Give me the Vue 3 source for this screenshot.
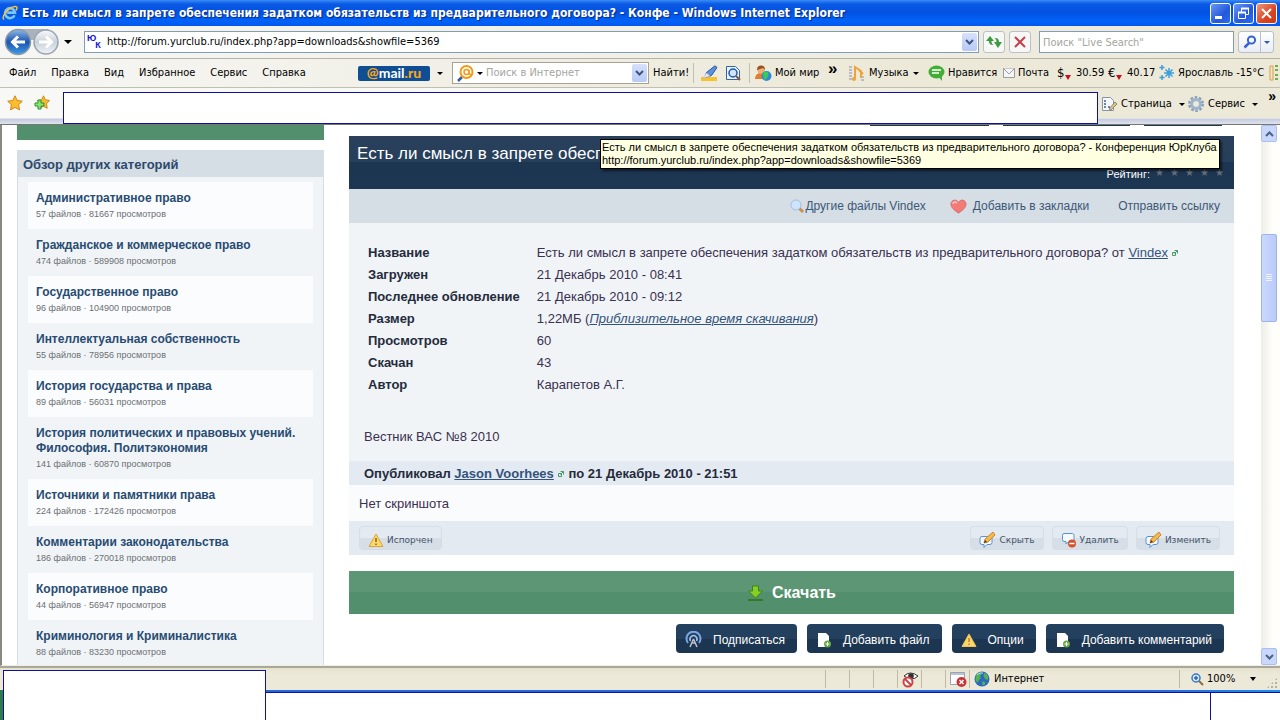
<script setup>
import { ref } from 'vue'

const address = ref('http://forum.yurclub.ru/index.php?app=downloads&showfile=5369')
const liveSearch = ref('')
const mailSearch = ref('')

const menu = ['Файл', 'Правка', 'Вид', 'Избранное', 'Сервис', 'Справка']

const categories = [
  { title: 'Административное право', files: 57, views: 81667 },
  { title: 'Гражданское и коммерческое право', files: 474, views: 589908 },
  { title: 'Государственное право', files: 96, views: 104900 },
  { title: 'Интеллектуальная собственность', files: 55, views: 78956 },
  { title: 'История государства и права', files: 89, views: 56031 },
  { title: 'История политических и правовых учений. Философия. Политэкономия', files: 141, views: 60870 },
  { title: 'Источники и памятники права', files: 224, views: 172426 },
  { title: 'Комментарии законодательства', files: 186, views: 270018 },
  { title: 'Корпоративное право', files: 44, views: 56947 },
  { title: 'Криминология и Криминалистика', files: 88, views: 83230 },
]
</script>

<template>
  <div class="window">
    <header class="titlebar">
      <svg class="ie-logo" width="16" height="16" viewBox="0 0 16 16">
        <path d="M12.6 10.2A5 5 0 1 1 13 7.6H5.2" fill="none" stroke="#7cc4f8" stroke-width="2.6" />
        <path d="M2 14.5C-1 12 6 2.500 13 1.500c3-.4 2 2.500 1 4" fill="none" stroke="#f2c53c" stroke-width="1.500" />
      </svg>
      <h1>Есть ли смысл в запрете обеспечения задатком обязательств из предварительного договора? - Конфе - Windows Internet Explorer</h1>
      <div class="window-buttons">
        <button aria-label="Свернуть">
          <svg width="19" height="19" viewBox="0 0 19 19"><path d="M4 13.500h7" stroke="#fff" stroke-width="3" /></svg>
        </button>
        <button aria-label="Восстановить">
          <svg width="19" height="19" viewBox="0 0 19 19" fill="none" stroke="#fff">
            <path d="M7.500 8V4.500h7v6H12" /><path d="M7 4.500h8M4 8.500h8" stroke-width="2" /><path d="M4.500 8.500h7v6h-7z" />
          </svg>
        </button>
        <button class="close" aria-label="Закрыть">
          <svg width="19" height="19" viewBox="0 0 19 19"><path d="M5 5l9 9M14 5l-9 9" stroke="#fff" stroke-width="2" /></svg>
        </button>
      </div>
    </header>

    <div class="navbar">
      <svg class="back-forward" width="56" height="28" viewBox="0 0 56 28">
        <defs>
          <linearGradient id="back" x2="0" y2="1"><stop offset="0" stop-color="#8fb7e8" /><stop offset=".5" stop-color="#1c55ae" /><stop offset="1" stop-color="#3f9ae8" /></linearGradient>
          <linearGradient id="forward" x2="0" y2="1"><stop offset="0" stop-color="#fafcfd" /><stop offset=".5" stop-color="#c8d1da" /><stop offset="1" stop-color="#eff4f8" /></linearGradient>
        </defs>
        <path d="M12 1h32v5c-8 0-8 6-16 6S20 4 12 4z" fill="#a9b2bd" />
        <circle cx="14" cy="14" r="12.500" fill="url(#back)" stroke="#8d9aaa" stroke-width="1.500" />
        <circle cx="42" cy="14" r="12" fill="url(#forward)" stroke="#9aa5b0" stroke-width="1.500" />
        <path d="M21 14H9M14 8.500L8.500 14l5.500 5.500" fill="none" stroke="#fff" stroke-width="3" />
        <path d="M35 14h12M42 8.500l5.500 5.500-5.500 5.500" fill="none" stroke="#fff" stroke-width="3" />
      </svg>
      <i class="arrow nav-arrow"></i>
      <div class="address">
        <span class="favicon"><b>Ю</b><b>К</b></span>
        <input v-model="address" aria-label="Адрес">
        <button class="drop" aria-label="Список адресов">
          <svg width="9" height="6" viewBox="0 0 9 6"><path d="M1 1l3.500 3.500L8 1" fill="none" stroke="#3e557f" stroke-width="2" /></svg>
        </button>
      </div>
      <button class="nav-button" aria-label="Обновить">
        <svg width="16" height="16" viewBox="0 0 16 16">
          <path d="M0 7l4-5 4 5H5.500c0 2 .5 3 2 4C4 11 3 9.500 3 7zM16 8l-4 6-4-6h2.500c0-2-.5-3-2-4C12 4 13 5.500 13 8z" fill="#3d9a41" />
        </svg>
      </button>
      <button class="nav-button" aria-label="Остановить">
        <svg width="14" height="14" viewBox="0 0 14 14"><path d="M2 2l10 10M12 2L2 12" stroke="#c4414b" stroke-width="2" /></svg>
      </button>
      <input v-model="liveSearch" class="live-search" placeholder='Поиск "Live Search"' aria-label="Live Search">
      <div class="search-buttons">
        <button aria-label="Найти">
          <svg width="14" height="14" viewBox="0 0 14 14" fill="none" stroke="#3564d4"><circle cx="8.500" cy="5" r="3.600" stroke-width="2" /><path d="M6 8l-4.500 4.500" stroke-width="2.500" /></svg>
        </button>
        <button aria-label="Параметры поиска"><i class="arrow blue"></i></button>
      </div>
    </div>

    <div class="menubar">
      <nav>
        <a v-for="item in menu" :key="item" href="#">{{ item }}</a>
      </nav>
      <a class="mailru" href="#"><b>@</b>mail<b>.ru</b></a>
      <i class="arrow mail-arrow"></i>
      <div class="mail-search">
        <svg width="17" height="17" viewBox="0 0 17 17" fill="none">
          <path d="M5 12l-4 4" stroke="#315b9c" stroke-width="2.500" />
          <circle cx="9.500" cy="7" r="6" stroke="#f59a17" stroke-width="2" /><circle cx="9.500" cy="7" r="2.500" stroke="#f59a17" stroke-width="1.500" /><path d="M12 5v4l3 1" stroke="#f59a17" stroke-width="1.500" />
        </svg>
        <i class="arrow"></i>
        <input v-model="mailSearch" placeholder="Поиск в Интернет" aria-label="Поиск в Интернет">
        <button class="drop" aria-label="История поиска">
          <svg width="9" height="6" viewBox="0 0 9 6"><path d="M1 1l3.500 3.500L8 1" fill="none" stroke="#3e557f" stroke-width="2" /></svg>
        </button>
      </div>
      <button class="find">Найти!</button>
      <div class="tool-icons">
        <svg width="17" height="16" viewBox="0 0 17 16"><path d="M0 12h16v4H0z" fill="#f8c22c" /><path d="M4 12.500l1.500-5L14 .800l2 1.700-5.500 8z" fill="#5b93e0" stroke="#28579d" /><path d="M2 13.500l3.500-5.500 3.500 3z" fill="#e8edf5" stroke="#a7b2c4" stroke-width=".6" /></svg>
        <svg width="16" height="16" viewBox="0 0 16 16" fill="none"><path d="M1.500 1.500h9l4 4v9h-13z" fill="#eef4fd" stroke="#2f65b5" /><circle cx="8" cy="8" r="4" fill="#cfe3fa" stroke="#2457a8" stroke-width="1.500" /><path d="M11 11l4 4" stroke="#8b5a32" stroke-width="2" /></svg>
      </div>
      <a class="tool my-world" href="#">
        <svg width="17" height="17" viewBox="0 0 17 17"><path d="M0 14c0-8 11-8 11 0z" fill="#e57d2e" /><circle cx="6" cy="5" r="3.700" fill="#f0b070" /><path d="M2 5c-.5-6 8.500-6 8 0L8 3z" fill="#9a5222" /><circle cx="11.500" cy="11" r="5" fill="#3288d8" /><path d="M8 8c3-3 7 0 5 3s-3 5-4 3z" fill="#38cd50" /></svg>
        Мой мир
      </a>
      <span class="chevrons">»</span>
      <a class="tool music" href="#">
        <svg width="17" height="17" viewBox="0 0 17 17"><path d="M1 2h3M1 5h3M1 8h3M1 11h3M1 14h3M13 12h3M13 15h3" stroke="#b9bcc2" stroke-width="2" /><path d="M7 14V2l6 4v7M11 5l4 4" fill="none" stroke="#efa33a" stroke-width="2" /><circle cx="6" cy="14" r="2" fill="#efa33a" /></svg>
        Музыка
        <i class="arrow"></i>
      </a>
      <a class="tool like" href="#">
        <svg width="17" height="16" viewBox="0 0 17 16"><ellipse cx="8.500" cy="7" rx="8" ry="6.500" fill="#42ad38" /><path d="M10 11l4 5v-6z" fill="#42ad38" /><path d="M4 5h9M4 8h7" stroke="#fff" stroke-width="1.500" /></svg>
        Нравится
      </a>
      <a class="tool mail" href="#">
        <svg width="12" height="10" viewBox="0 0 12 10" fill="#f5f5f6" stroke="#9a9da6"><path d="M.5.500h11v9H.5z" /><path d="M.5.500L6 6l5.500-5.500" /></svg>
        Почта
      </a>
      <a class="tool rate" href="#"><span>$</span><i></i>30.59</a>
      <a class="tool rate" href="#"><span>€</span><i></i>40.17</a>
      <a class="tool weather" href="#">
        <svg width="16" height="16" viewBox="0 0 16 16" stroke="#3b9ddc" fill="none"><path d="M10 3v10M5 8h10M6.500 4.500l7 7M13.500 4.500l-7 7" stroke-width="1.500" /><path d="M3 0v5M.500 2.500h5M3 10v5M.500 12.500h5" stroke-width="1.500" /></svg>
        Ярославль -15°C
      </a>
      <svg class="cut-icon" width="9" height="16" viewBox="0 0 9 16"><path d="M1 1h3v14H1z" fill="#f5e6c8" stroke="#d99a4a" /><path d="M6 1h3M6 5h3M6 10h3M6 14h3" stroke="#6fb04d" stroke-width="2" /></svg>
    </div>

    <div class="favbar">
      <button class="fav" aria-label="Избранное">
        <svg width="16" height="16" viewBox="0 0 16 16"><path d="M8 .8l2.200 4.700 5.100.7-3.700 3.500.9 5.200L8 12.400l-4.500 2.500.9-5.200L.7 6.200l5.100-.7z" fill="#fbbd2c" stroke="#cf861b" /></svg>
      </button>
      <button class="fav" aria-label="Добавить в избранное">
        <svg width="16" height="16" viewBox="0 0 16 16"><path d="M9.500.8l1.800 4 4.200.7-3 3.200.7 4.600-3.700-2-4 2 .8-4.600-3-3.200 4.400-.7z" fill="#fbbd2c" stroke="#cf861b" /><path d="M4 5h3v3h3v3H7v3H4v-3H1V8h3z" fill="#8be26c" stroke="#2c9231" /></svg>
      </button>
      <div class="blank-tabs"></div>
      <div class="commands">
        <a class="page-menu" href="#">
          <svg width="16" height="16" viewBox="0 0 16 16"><path d="M1.500 1.500h8l3 3v10h-11z" fill="#f4f7fb" stroke="#8794a8" /><path d="M3 5h2M3 8h2M3 11h2M7 11h2" stroke="#6e83ab" stroke-width="2" /><path d="M8 13l6-7 2 2-6 6z" fill="#d8c58c" stroke="#756849" stroke-width=".7" /></svg>
          Страница
          <i class="arrow"></i>
        </a>
        <a href="#">
          <svg width="16" height="16" viewBox="0 0 16 16" fill="none"><circle cx="8" cy="8" r="6.500" stroke="#8da2bb" stroke-width="3" stroke-dasharray="2.500 1.580" /><circle cx="8" cy="8" r="4.500" stroke="#9fb4cc" stroke-width="3" /></svg>
          Сервис
          <i class="arrow"></i>
        </a>
        <span class="chevrons">»</span>
      </div>
    </div>

    <div class="viewport">
      <div class="page">
        <aside>
          <div class="green-tail"></div>
          <section class="categories">
            <h2>Обзор других категорий</h2>
            <ul>
              <li v-for="cat in categories" :key="cat.title">
                <a href="#">{{ cat.title }}</a>
                <p>{{ cat.files }} файлов · {{ cat.views }} просмотров</p>
              </li>
            </ul>
          </section>
        </aside>

        <main>
          <div class="button-tails"><i></i><i></i><i></i></div>
          <div class="file-head">
            <h2>Есть ли смысл в запрете обеспечения</h2>
            <div class="rating">Рейтинг: <span v-for="n in 5" :key="n">★</span></div>
          </div>
          <div class="file-links">
            <a href="#">
              <svg width="15" height="15" viewBox="0 0 15 15"><path d="M9 9l4 4" stroke="#c9924b" stroke-width="3" /><circle cx="6" cy="6" r="5" fill="#cde4fa" stroke="#9fc0e4" /></svg>Другие файлы Vindex
            </a>
            <a class="bookmark" href="#">
              <svg width="17" height="15" viewBox="0 0 17 15"><path d="M8.500 14C4 11 1 8.500 1 5c0-4 5.500-5.500 7.500-1.500C10.500-.5 16 1 16 5c0 3.500-3 6-7.500 9z" fill="#f47a78" stroke="#d66b6b" /><path d="M3 5c0-2 2-3 4-1" fill="none" stroke="#fcc5c2" stroke-width="1.500" /></svg>
              Добавить в закладки
            </a>
            <a class="send" href="#">Отправить ссылку</a>
          </div>

          <div class="details">
            <table>
              <tbody>
                <tr>
                  <th scope="row">Название</th>
                  <td>
                    Есть ли смысл в запрете обеспечения задатком обязательств из предварительного договора? от <a href="#">Vindex</a>
                    <svg class="popup" width="6" height="6" viewBox="0 0 6 6" fill="none" stroke="#4b9a68"><path d="M.500 2.500h3v3h-3zM2.500.500h3v3M2.500 3.500l3-3" /></svg>
                  </td>
                </tr>
                <tr><th scope="row">Загружен</th><td>21 Декабрь 2010 - 08:41</td></tr>
                <tr><th scope="row">Последнее обновление</th><td>21 Декабрь 2010 - 09:12</td></tr>
                <tr><th scope="row">Размер</th><td>1,22МБ (<a href="#"><em>Приблизительное время скачивания</em></a>)</td></tr>
                <tr><th scope="row">Просмотров</th><td>60</td></tr>
                <tr><th scope="row">Скачан</th><td>43</td></tr>
                <tr><th scope="row">Автор</th><td>Карапетов А.Г.</td></tr>
              </tbody>
            </table>
            <p>Вестник ВАС №8 2010</p>
          </div>
          <div class="published">
            Опубликовал <a href="#">Jason Voorhees</a>
            <svg class="popup" width="6" height="6" viewBox="0 0 6 6" fill="none" stroke="#4b9a68"><path d="M.500 2.500h3v3h-3zM2.500.500h3v3M2.500 3.500l3-3" /></svg>
            по 21 Декабрь 2010 - 21:51
          </div>
          <div class="screenshot">Нет скриншота</div>
          <div class="moderation">
            <button class="broken">
              <svg width="16" height="16" viewBox="0 0 16 16"><path d="M8 2l7 12.500H1z" fill="#fbd768" stroke="#dba63a" stroke-linejoin="round" /><path d="M8 6v4M8 11.500v1.500" stroke="#8d6420" stroke-width="1.500" /></svg>
              Испорчен
            </button>
            <button v-for="label in ['Скрыть', 'Удалить', 'Изменить']" :key="label">
              <svg v-if="label === 'Удалить'" width="16" height="16" viewBox="0 0 16 16"><path d="M3 1.500h8.500q1.500 0 1.500 2v4q0 2-1.500 2H8L5 12V9.500H3q-1.500 0-1.500-2v-4q0-2 1.500-2z" fill="#f4f9fe" stroke="#5b92cd" /><circle cx="11" cy="11.500" r="4" fill="#d65228" /><path d="M8.500 11.500h5" stroke="#fff" stroke-width="1.500" /></svg>
              <svg v-else width="17" height="16" viewBox="0 0 17 16"><path d="M3 4.500h8q2 0 2 2v4q0 2-2 2H8l-3 3v-3H3q-2 0-2-2v-4q0-2 2-2z" fill="#f4f9fe" stroke="#5b92cd" /><path d="M5 11l1-4 8-7 2 3-7 7z" fill="#f6b74a" stroke="#c98830" /><path d="M5 11l1-3 2 2z" fill="#483b30" /></svg>
              {{ label }}
            </button>
          </div>

          <button class="download">
            <svg width="17" height="16" viewBox="0 0 17 16"><path d="M1 15h15" stroke="#357825" stroke-width="2" /><path d="M5.500 1h6v5h4l-7 7-7-7h4z" fill="#87cf27" stroke="#3c8617" /></svg>
            Скачать
          </button>

          <div class="page-buttons">
            <button>
              <svg width="17" height="17" viewBox="0 0 17 17" fill="none"><path d="M3 12A7 7 0 1 1 14 12" stroke="#7ba5e7" stroke-width="2" /><path d="M5.500 10a3.500 3.500 0 1 1 6 0" stroke="#a7c6f3" stroke-width="1.500" /><path d="M8.500 8l-3.500 8M8.500 8l3.500 8M7 12h3" stroke="#bcc3cf" stroke-width="1.500" /></svg>
              Подписаться
            </button>
            <button>
              <svg width="16" height="16" viewBox="0 0 16 16"><path d="M2 1h8l3 3v11H2z" fill="#fff" /><circle cx="11.500" cy="12" r="3.500" fill="#65a843" /><path d="M9.500 12h4M11.500 10v4" stroke="#fff" /></svg>
              Добавить файл
            </button>
            <button>
              <svg width="16" height="16" viewBox="0 0 16 16"><path d="M8 2l7 12.500H1z" fill="#fbd768" stroke="#f2bd59" stroke-linejoin="round" /><path d="M8 6v4M8 11.500v1.500" stroke="#b4843a" stroke-width="1.500" /></svg>
              Опции
            </button>
            <button>
              <svg width="16" height="16" viewBox="0 0 16 16"><path d="M2 1h8l3 3v11H2z" fill="#fff" /><circle cx="11.500" cy="12" r="3.500" fill="#65a843" /><path d="M9.500 12h4M11.500 10v4" stroke="#fff" /></svg>
              Добавить комментарий
            </button>
          </div>
        </main>
      </div>

      <div class="scrollbar">
        <button aria-label="Вверх"><svg width="9" height="6" viewBox="0 0 9 6"><path d="M1 5l3.500-3.500L8 5" fill="none" stroke="#4d6185" stroke-width="2" /></svg></button>
        <div class="track">
          <div class="thumb"><i></i><i></i><i></i><i></i></div>
        </div>
        <button aria-label="Вниз"><svg width="9" height="6" viewBox="0 0 9 6"><path d="M1 1l3.500 3.500L8 1" fill="none" stroke="#4d6185" stroke-width="2" /></svg></button>
      </div>
    </div>

    <footer class="statusbar">
      <i></i><i></i><i></i>
      <span class="cell">
        <svg width="17" height="17" viewBox="0 0 17 17" fill="none"><path d="M2 5q6-6 14 0-6 6-14 0z" fill="#fff" stroke="#333" /><circle cx="9" cy="5" r="2.800" fill="#333" /><circle cx="6" cy="11" r="4.500" fill="#fff" stroke="#cf4242" stroke-width="2" /><path d="M3 8l6 6" stroke="#cf4242" stroke-width="2" /></svg>
      </span>
      <i></i>
      <span class="cell">
        <svg width="17" height="17" viewBox="0 0 17 17"><path d="M.5 1.500h14v12H.5z" fill="#fff" stroke="#9aa2b0" /><path d="M1 3h13" stroke="#b9c4d6" stroke-width="2" /><circle cx="11.500" cy="11" r="5" fill="#c93338" /><path d="M9.500 9l4 4M13.500 9l-4 4" stroke="#fff" stroke-width="1.500" /></svg>
      </span>
      <span class="zone">
        <svg width="16" height="16" viewBox="0 0 16 16"><circle cx="8" cy="8" r="7.500" fill="#2c68bd" /><path d="M3 3c3-3 6-1 4 1s1 3-1 4-1 4-3 3-2-5 0-8zM10 2c4 1 5 4 4 6s-3 0-4-2 0-2 0-4zM8 11c2-1 4 0 3 2s-3 2-3-2z" fill="#52b353" /><path d="M3 4q3-3 6-2" stroke="#b9dcf7" fill="none" /></svg>
        Интернет
      </span>
      <span class="zoom">
        <svg width="13" height="13" viewBox="0 0 13 13" fill="none"><circle cx="5" cy="5" r="4" fill="#d7e9fb" stroke="#3878c8" stroke-width="1.500" /><path d="M3 5h4M5 3v4" stroke="#2a66b8" stroke-width="1.500" /><path d="M8 8l4 4" stroke="#8b6a42" stroke-width="2" /></svg>
        100%
        <i class="arrow"></i>
      </span>
      <span class="grip"></span>
    </footer>
    <div class="taskbar"><div class="tasks"></div><div class="tray"></div></div>
    <div class="blank-start"></div>

    <div class="tooltip" role="tooltip">
      Есть ли смысл в запрете обеспечения задатком обязательств из предварительного договора? - Конференция ЮрКлуба<br>
      http://forum.yurclub.ru/index.php?app=downloads&amp;showfile=5369
    </div>
  </div>
</template>

<style>
body {
  margin: 0;
}
</style>

<style scoped>
* {
  box-sizing: border-box;
}

.window {
  position: relative;
  display: flex;
  flex-direction: column;
  height: 100vh;
  min-width: 1240px;
  overflow: hidden;
  background: #fff;
  font: 11px/14px "DejaVu Sans Condensed", Tahoma, sans-serif;
  color: #000;
}

a {
  color: inherit;
  text-decoration: none;
}

button,
input {
  padding: 0;
  border: 0;
  background: none;
  font: inherit;
  color: inherit;
}

input {
  outline: none;
  min-width: 0;
}

input::placeholder {
  color: #a5a5a0;
  opacity: 1;
}

svg {
  flex: none;
}

.arrow {
  flex: none;
  border: 3px solid transparent;
  border-top-color: #000;
  border-bottom: 0;
}

.arrow.blue {
  border-top-color: #2858c8;
}

.titlebar {
  display: flex;
  align-items: center;
  flex: none;
  height: 26px;
  padding: 0 3px 0 2px;
  background: linear-gradient(#3a8cf5 0, #0a5ae6 4px, #0351e0 12px, #0262f8 21px, #0358ee 100%);
  color: #fff;
}

.titlebar h1 {
  flex: 1;
  margin: 0 0 0 4px;
  overflow: hidden;
  white-space: nowrap;
  font: bold 12px/20px "DejaVu Sans Condensed", "Trebuchet MS", sans-serif;
  text-shadow: 1px 1px 1px #0a2a80;
}

.window-buttons {
  display: flex;
  gap: 2px;
}

.window-buttons button {
  width: 21px;
  height: 21px;
  border: 1px solid #fff;
  border-radius: 3px;
  background: linear-gradient(135deg, #6b98f5, #2458dc 60%, #2a6cf0);
}

.window-buttons svg {
  display: block;
}

.window-buttons .close {
  background: linear-gradient(135deg, #f0967a, #da4423 60%, #c83a18);
}

.navbar {
  display: flex;
  align-items: center;
  flex: none;
  height: 33px;
  padding: 0 6px 0 4px;
  border-bottom: 1px solid #b5b3a6;
  background: linear-gradient(90deg, #f6f6f4, #ece9d8);
}

.nav-arrow {
  margin: 0 12px 0 4px;
  border-width: 4px 4px 0;
}

.address {
  display: flex;
  align-items: center;
  flex: 1;
  height: 22px;
  padding: 0 1px 0 2px;
  border: 1px solid #7f9db9;
  background: #fff;
}

.address input {
  flex: 1;
  margin-left: 4px;
}

.favicon {
  display: flex;
  width: 16px;
  height: 16px;
  color: #1414d0;
  font: 9px/9px "Liberation Sans", Arial, sans-serif;
}

.favicon b + b {
  align-self: flex-end;
  margin-left: -1px;
}

.drop {
  display: flex;
  align-items: center;
  justify-content: center;
  width: 15px;
  height: 18px;
  border-radius: 2px;
  background: linear-gradient(#d6e1fb, #b7c9f5);
}

.nav-button {
  display: flex;
  align-items: center;
  justify-content: center;
  width: 22px;
  height: 22px;
  margin-left: 4px;
  border: 1px solid #b9c0cb;
  border-radius: 3px;
  background: #f7f7f5;
}

.live-search {
  width: 195px;
  height: 22px;
  margin: 0 4px 0 8px;
  padding: 0 3px;
  border: 1px solid #7f9db9;
  background: #fff;
}

.search-buttons {
  display: flex;
  height: 22px;
  border: 1px solid #b4c0d2;
  border-radius: 3px;
  background: linear-gradient(#fff, #e9edf5);
}

.search-buttons button {
  display: flex;
  align-items: center;
  justify-content: center;
  width: 21px;
}

.search-buttons button + button {
  width: 13px;
  border-left: 1px solid #b4c0d2;
}

.menubar {
  display: flex;
  align-items: center;
  flex: none;
  height: 29px;
  padding-left: 9px;
  border-bottom: 1px solid #c1bfb1;
  background: linear-gradient(90deg, #f6f6f4, #ece9d8 70%);
  white-space: nowrap;
}

.menubar nav {
  display: flex;
  gap: 15px;
  width: 349px;
}

.mailru {
  width: 72px;
  height: 15px;
  border-radius: 2px;
  background: #0f4e94;
  color: #fff;
  text-align: center;
  font: bold 14px/14px Lato, sans-serif;
}

.mailru b {
  color: #f9a51b;
}

.mail-arrow {
  margin: 0 9px 0 7px;
}

.mail-search {
  display: flex;
  align-items: center;
  gap: 3px;
  width: 197px;
  height: 22px;
  padding: 0 1px 0 4px;
  border: 1px solid #a5a394;
  background: #fff;
}

.mail-search input {
  flex: 1;
}

.find {
  width: 45px;
  height: 20px;
  border-right: 1px solid #c1bfb1;
  text-align: left;
  padding-left: 4px;
}

.tool-icons {
  display: flex;
  justify-content: space-between;
  width: 56px;
  padding: 2px 8px 2px 7px;
  border-right: 1px solid #c1bfb1;
}

.tool {
  display: flex;
  align-items: center;
  gap: 3px;
}

.my-world {
  width: 73px;
  margin-left: 5px;
}

.chevrons {
  font: bold 17px/17px "Liberation Sans", sans-serif;
  align-self: flex-start;
}

.menubar .chevrons {
  width: 20px;
  margin-top: 1px;
}

.music {
  width: 80px;
  gap: 4px;
}

.like {
  width: 75px;
}

.mail {
  width: 54px;
}

.rate {
  width: 51px;
  gap: 0;
}

.rate span {
  width: 8px;
  font-size: 13px;
}

.rate i {
  margin: 8px 5px 0 0;
  border: 3px solid transparent;
  border-top: 5px solid #c8101c;
  border-bottom: 0;
}

.weather {
  flex: 1;
}

.cut-icon {
  margin-right: 2px;
}

.favbar {
  display: flex;
  align-items: flex-start;
  flex: none;
  height: 37px;
  padding: 4px 0 0 7px;
  border-bottom: 1px solid #77776f;
  background: linear-gradient(90deg, transparent, transparent 50%, #ece9d8 80%) 0 0 / 100% 30px no-repeat, linear-gradient(#f8f8f7 30px, #c5cadd 31px, #dfe3ee 36px);
}

.fav {
  width: 27px;
  height: 22px;
  text-align: left;
}

.fav svg {
  display: block;
}

.blank-tabs {
  flex: 1;
  height: 32px;
  margin-left: 2px;
  border: 1px solid #1010a0;
  background: #fff;
}

.commands {
  display: flex;
  align-items: center;
  width: 182px;
  height: 24px;
  padding-left: 3px;
}

.commands a {
  display: flex;
  align-items: center;
  gap: 4px;
  white-space: nowrap;
}

.commands .arrow {
  margin-left: 3px;
}

.commands .page-menu {
  width: 87px;
}

.commands .chevrons {
  margin-left: auto;
  padding-right: 4px;
  font-size: 14px;
  line-height: 8px;
}

.viewport {
  display: flex;
  flex: 1;
  min-height: 0;
  border-left: 2px solid #8a897f;
  border-bottom: 1px solid #f0eee2;
  overflow: hidden;
}

.page {
  display: flex;
  flex: 1;
  gap: 25px;
  min-width: 0;
  padding: 0 27px 0 15px;
  font: 13px/22px "Liberation Sans", Arial, sans-serif;
  color: #3a3050;
}

aside {
  flex: none;
  width: 307px;
}

.green-tail {
  height: 15px;
  background: #528f6c;
}

.categories {
  margin-top: 10px;
  padding-bottom: 40px;
  border: 1px solid #d5dde5;
  border-top: 0;
  background: #f0f4f7;
}

.categories h2 {
  margin: 0 0 5px;
  padding: 2px 5px 0;
  background: #d5dde5;
  color: #2d4a6c;
  font: bold 13px/25px "Liberation Sans", Arial, sans-serif;
}

.categories ul {
  margin: 0;
  padding: 0 10px;
  list-style: none;
}

.categories li {
  padding: 9px 8px 6px;
}

.categories li:nth-child(odd) {
  background: #fafcfd;
}

.categories a {
  display: block;
  color: #284b72;
  font-weight: bold;
  font-size: 12px;
  line-height: 15px;
}

.categories p {
  margin: 0;
  color: #6c6f74;
  font-size: 9px;
  line-height: 17px;
}

main {
  flex: 1;
  min-width: 0;
}

.button-tails {
  display: flex;
  justify-content: flex-end;
  gap: 14px;
  height: 1px;
  margin-bottom: 10px;
  padding-right: 12px;
}

.button-tails i {
  width: 119px;
  background: #1d3652;
}

.button-tails i:nth-child(2) {
  width: 127px;
}

.button-tails i:nth-child(3) {
  width: 78px;
}

.file-head {
  height: 53px;
  padding: 6px 9px 0 8px;
  background: linear-gradient(#2a405c, #253f5b 50%, #1c3550 50%, #1d3652);
  color: #fff;
}

.file-head h2 {
  margin: 0;
  font-size: 17px;
  line-height: 24px;
  font-weight: normal;
  white-space: nowrap;
}

.rating {
  display: flex;
  justify-content: flex-end;
  gap: 4px;
  font-size: 11px;
  line-height: 16px;
}

.rating span {
  width: 11px;
  text-align: center;
  font-size: 10px;
  line-height: 13px;
  color: #66707d;
}

.file-links {
  display: flex;
  justify-content: flex-end;
  align-items: center;
  height: 34px;
  padding-right: 14px;
  background: #d5dde5;
  color: #3c5878;
  font-size: 12px;
}

.file-links a {
  display: flex;
  align-items: center;
}

.bookmark {
  gap: 6px;
  margin: 0 29px 0 24px;
}

.details {
  padding: 19px 15px 13px;
  background: #f0f4f7;
}

.details table {
  border-collapse: collapse;
}

.details th {
  padding: 0 17px 0 4px;
  text-align: left;
  color: #252b3c;
}

.details td {
  padding: 0;
}

.details a,
.published a {
  color: #33537c;
  text-decoration: underline;
}

.details p {
  margin: 30px 0 0;
}

.popup {
  margin: 0 1px 1px 4px;
}

.published {
  padding: 2px 15px 0;
  background: #e4eaf2;
  color: #252b3c;
  font-weight: bold;
}

.screenshot {
  padding: 8px 10px 6px;
  background: #fafbfd;
}

.moderation {
  display: flex;
  align-items: center;
  gap: 8px;
  height: 34px;
  padding: 0 14px 0 10px;
  background: #e4eaf2;
}

.moderation button {
  display: flex;
  align-items: center;
  gap: 3px;
  height: 24px;
  padding: 4px 8px 0;
  border: 1px solid #d5dde5;
  border-radius: 4px;
  background: linear-gradient(#e4eaf2 50%, #d6dfe7 50%);
  color: #46556a;
  font: 9px/16px "DejaVu Sans", Verdana, sans-serif;
}

.moderation .broken {
  margin-right: auto;
}

.download {
  display: flex;
  align-items: center;
  justify-content: center;
  gap: 8px;
  width: 100%;
  height: 43px;
  margin: 16px 0 10px;
  background: linear-gradient(#5c9674 50%, #528f6c 50%);
  color: #fff;
  font-weight: bold;
  font-size: 16px;
}

.page-buttons {
  display: flex;
  justify-content: flex-end;
  gap: 10px;
  padding-right: 10px;
}

.page-buttons button {
  display: flex;
  align-items: center;
  gap: 11px;
  height: 29px;
  padding: 2px 12px 0 9px;
  border-radius: 4px;
  background: linear-gradient(#24405f 50%, #1c3550 50%);
  color: #fff;
  font-size: 12px;
}

.scrollbar {
  display: flex;
  flex-direction: column;
  width: 19px;
  padding: 0 2px 0 0;
  background: linear-gradient(90deg, #eeede5, #fefefb 60%);
}

.scrollbar button {
  display: flex;
  align-items: center;
  justify-content: center;
  width: 16px;
  height: 17px;
  border: 1px solid #aabfee;
  border-radius: 2px;
  background: #c9d7fc;
}

.track {
  display: flex;
  flex-direction: column;
  flex: 1;
}

.track::before {
  content: '';
  flex: 92;
}

.track::after {
  content: '';
  flex: 327;
}

.thumb {
  display: flex;
  flex-direction: column;
  align-items: center;
  justify-content: center;
  gap: 1px;
  flex: 86;
  width: 16px;
  border: 1px solid #9cb3ee;
  border-radius: 2px;
  background: linear-gradient(90deg, #cad8fd, #bacbfa);
}

.thumb i {
  width: 6px;
  height: 1px;
  background: #f0f5ff;
}

.statusbar {
  display: flex;
  align-items: center;
  flex: none;
  height: 24px;
  justify-content: flex-end;
  border-top: 2px solid #aaa899;
  background: linear-gradient(#e4e1cf, #ece9d8 6px);
}

.statusbar > i,
.cell,
.zone,
.zoom {
  display: flex;
  align-items: center;
  width: 24px;
  height: 18px;
  padding-left: 4px;
  border-left: 1px solid #bdbaa8;
}

.statusbar .zone {
  width: 210px;
  gap: 4px;
}

.statusbar .zoom {
  width: 77px;
  padding-left: 11px;
  gap: 3px;
}

.zoom .arrow {
  margin-left: auto;
  border-width: 4px 3px 0;
}

.grip {
  width: 12px;
  height: 12px;
  margin: 8px 2px 0 10px;
  background: radial-gradient(circle, #b5b2a0 1px, transparent 1px) 0 0 / 4px 4px;
  clip-path: polygon(100% 0, 100% 100%, 0 100%);
}

.taskbar {
  display: flex;
  flex: none;
  height: 30px;
  padding: 2px 0 0 4px;
  background: linear-gradient(90deg, #2e7d46 3px, #2a66dc 4px, #2a66dc 90%, #1c90ee);
}

.tasks {
  flex: 1;
  border-top: 1px solid #1010a0;
  background: #fff;
}

.tray {
  width: 70px;
  border: 1px solid #1010a0;
  border-width: 1px 0 0 1px;
  background: #fff;
}

.blank-start {
  position: absolute;
  left: 3px;
  bottom: 0;
  width: 263px;
  height: 50px;
  border: 1px solid #1010a0;
  border-bottom: 0;
  background: #fff;
}

.tooltip {
  position: absolute;
  left: 600px;
  top: 139px;
  min-width: 620px;
  padding: 1px;
  border: 1px solid #000;
  background: #ffffe1;
  box-shadow: 2px 2px 2px rgba(0, 0, 0, .5);
  font-family: "Liberation Sans", Tahoma, sans-serif;
  line-height: 13px;
  white-space: nowrap;
}
</style>
